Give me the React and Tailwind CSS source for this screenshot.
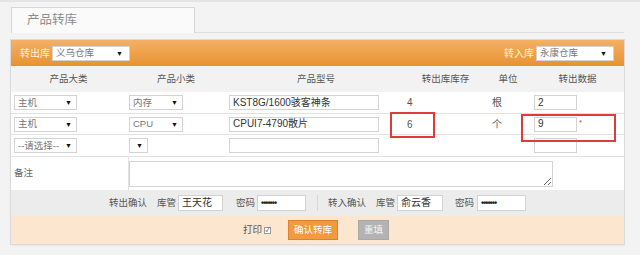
import React from "react";

function Sel({ w, text, arrowPr = 4 }) {
  return (
    <div
      className="h-[15px] bg-white border border-[#d3d3d3] flex items-center justify-between pl-[3px] text-[9.5px] text-[#777] leading-none whitespace-nowrap"
      style={{ width: w, paddingRight: arrowPr }}
    >
      <span>{text}</span>
      <span className="text-[7px] text-[#111]">▼</span>
    </div>
  );
}

function Inp({ w, text, h = 15, pwd = false }) {
  return (
    <div
      className={`bg-white border border-[#d3d3d3] flex items-center pl-[3px] leading-none whitespace-nowrap ${pwd ? "text-[9px] text-[#222] tracking-[-1px] font-bold" : "text-[10px] text-[#333]"}`}
      style={{ width: w, height: h }}
    >
      {text}
    </div>
  );
}

export default function App() {
  const cols = [115, 100, 180, 79, 46, 93];
  const headers = ["产品大类", "产品小类", "产品型号", "转出库库存", "单位", "转出数据"];
  return (
    <div className="w-[640px] h-[255px] bg-[#f3f3f3] overflow-hidden border-t-2 border-[#e4e4e4] font-['Liberation_Sans','Noto_Sans_CJK_SC',sans-serif] text-[9.5px] text-[#555]">
      <div className="pt-[5px] pl-[11px]">
        <div className="w-[613px] h-[26px] border-b border-[#dedede] flex">
          <div className="w-[184px] h-[26px] border border-b-0 border-[#d6d6d6] bg-[#fafafa] pl-[15px] flex items-center text-[12.5px] text-[#8c8c8c]">
            产品转库
          </div>
        </div>
      </div>

      <div className="relative ml-[11px] mt-[7px] w-[613px] bg-white shadow-[0_0_0_1px_#dadada,0_1px_2px_rgba(0,0,0,0.12)]">
        <div className="h-[26px] flex items-center justify-between pl-[9px] pr-[10px] bg-gradient-to-b from-[#f4b064] to-[#e8922f] text-[10px] text-[#fff1df]">
          <div className="flex items-center">
            <span className="w-[32px] whitespace-nowrap">转出库</span>
            <Sel w={78} text="义乌仓库" arrowPr={6} />
          </div>
          <div className="flex items-center">
            <span className="w-[32px] whitespace-nowrap">转入库</span>
            <Sel w={78} text="永康仓库" arrowPr={6} />
          </div>
        </div>

        <div className="h-[26px] flex items-center bg-[#f2f2f2] text-[#555]">
          {headers.map((h, i) => (
            <div key={i} className="text-center whitespace-nowrap" style={{ width: cols[i] }}>
              {h}
            </div>
          ))}
        </div>

        <div className="h-[22px] flex items-center border-b border-[#e2e2e2]">
          <div className="w-[115px] pl-[3px]"><Sel w={63} text="主机" /></div>
          <div className="w-[100px] pl-[3px]"><Sel w={54} text="内存" /></div>
          <div className="w-[180px] pl-[3px]"><Inp w={150} text="KST8G/1600骇客神条" /></div>
          <div className="w-[79px] pl-[1px] text-[10px] text-[#555]">4</div>
          <div className="w-[46px] pl-[7px] text-[10px] text-[#555]">根</div>
          <div className="w-[93px] pl-[3px]"><Inp w={43} text="2" /></div>
        </div>

        <div className="h-[21px] flex items-center border-b border-[#e2e2e2]">
          <div className="w-[115px] pl-[3px]"><Sel w={63} text="主机" /></div>
          <div className="w-[100px] pl-[3px]"><Sel w={54} text="CPU" /></div>
          <div className="w-[180px] pl-[3px]"><Inp w={150} text="CPUI7-4790散片" /></div>
          <div className="w-[79px] pl-[1px] text-[10px] text-[#555]">6</div>
          <div className="w-[46px] pl-[7px] text-[10px] text-[#555]">个</div>
          <div className="w-[93px] pl-[3px] flex items-center">
            <Inp w={43} text="9" />
            <span className="ml-[2px] mb-[3px] text-[8px] text-[#e03b3b] leading-none">*</span>
          </div>
        </div>

        <div className="h-[22px] flex items-center border-b border-[#e2e2e2]">
          <div className="w-[115px] pl-[3px]"><Sel w={63} text="--请选择--" /></div>
          <div className="w-[100px] pl-[3px]"><Sel w={19} text="" /></div>
          <div className="w-[180px] pl-[3px]"><Inp w={150} text="" /></div>
          <div className="w-[79px]" />
          <div className="w-[46px]" />
          <div className="w-[93px] pl-[3px]"><Inp w={43} text="" /></div>
        </div>

        <div className="h-[33px] flex">
          <div className="w-[118px] border-r border-[#e2e2e2] pl-[3px] flex items-center text-[#666]">备注</div>
          <div className="pt-[4px]">
            <textarea
              readOnly
              className="block w-[424px] h-[26px] border border-[#d3d3d3] bg-white outline-none"
            />
          </div>
        </div>

        <div className="h-[26px] flex items-center bg-[#ececec] text-[#555] whitespace-nowrap">
          <span className="ml-[98px] w-[37px]">转出确认</span>
          <span className="ml-[11px] w-[18px]">库管</span>
          <div className="ml-[3px]"><Inp w={45} text="王天花" h={16} /></div>
          <span className="ml-[13px] w-[18px]">密码</span>
          <div className="ml-[3px]"><Inp w={49} text="•••••••" h={16} pwd /></div>
          <div className="ml-[11px] w-px h-[16px] bg-[#d8d8d8]" />
          <span className="ml-[10px] w-[37px]">转入确认</span>
          <span className="ml-[11px] w-[18px]">库管</span>
          <div className="ml-[3px]"><Inp w={46} text="俞云香" h={16} /></div>
          <span className="ml-[12px] w-[18px]">密码</span>
          <div className="ml-[4px]"><Inp w={49} text="•••••••" h={16} pwd /></div>
        </div>

        <div className="h-[28px] flex items-center bg-[#fde6cf] whitespace-nowrap">
          <span className="ml-[232px] w-[18px] text-[#555]">打印</span>
          <span className="ml-[3px] w-[7px] h-[7px] border border-[#999] bg-white flex items-center justify-center text-[6px] leading-none text-[#222]">✓</span>
          <div className="ml-[17px] w-[50px] h-[20px] bg-[#f39a40] border border-[#d88532] text-white flex items-center justify-center text-[9.5px]">
            确认转库
          </div>
          <div className="ml-[20px] w-[31px] h-[20px] bg-[#b3b3b3] border border-[#a8a8a8] text-[#f3f3f3] flex items-center justify-center text-[9.5px]">
            重填
          </div>
        </div>

        <div className="absolute left-[379px] top-[72px] w-[45px] h-[26px] border-2 border-[#e03b3b]" />
        <div className="absolute left-[510px] top-[74px] w-[95px] h-[28px] border-2 border-[#e03b3b]" />
      </div>
    </div>
  );
}
